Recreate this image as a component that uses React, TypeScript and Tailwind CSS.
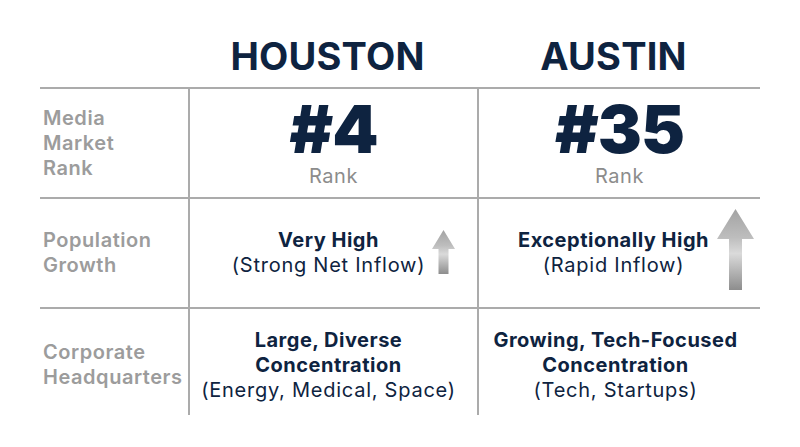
import React from "react";

function Arrow({ big }: { big?: boolean }) {
  const id = big ? "arrBig" : "arrSmall";
  const w = big ? 37 : 23;
  const h = big ? 81 : 44;
  const head = big ? 30 : 19;
  const s0 = big ? 12 : 6.5;
  const s1 = big ? 25 : 16.5;
  const pts = `${w / 2},0 ${w},${head} ${s1},${head} ${s1},${h} ${s0},${h} ${s0},${head} 0,${head}`;
  return (
    <svg width={w} height={h} viewBox={`0 0 ${w} ${h}`}>
      <defs>
        <linearGradient id={id} x1="0" y1="0" x2="0" y2="1">
          <stop offset="0" stopColor="#a3a3a3" />
          <stop offset="0.35" stopColor="#bdbdbd" />
          <stop offset="0.55" stopColor="#dadada" />
          <stop offset="1" stopColor="#8d8d8d" />
        </linearGradient>
      </defs>
      <polygon points={pts} fill={`url(#${id})`} />
    </svg>
  );
}

export default function App() {
  const label = "text-[20px] leading-[25px] font-semibold tracking-[0.55px] text-[#9c9c9c]";
  const bold = "text-[20px] leading-[25px] font-bold tracking-[0.5px]";
  const reg = "text-[20px] leading-[25px] tracking-[0.75px]";
  const cell = "relative flex flex-col items-center justify-center text-center border-t-2 border-l-2 border-[#ababab]";
  const labelCell = "flex flex-col justify-center pl-[3px] border-t-2 border-[#ababab]";

  return (
    <div className="w-[800px] h-[447px] bg-white px-[40px] font-['Inter','Liberation_Sans',sans-serif] text-[#0e2340]">
      <div className="grid grid-cols-[148px_289px_283px] grid-rows-[87px_110px_110px_108px]">
        {/* header */}
        <div />
        <div className="flex items-start justify-center pt-[34px] pr-[10px]">
          <div className="text-[38px] leading-[44px] font-bold tracking-[0.2px]">HOUSTON</div>
        </div>
        <div className="flex items-start justify-center pt-[34px] pr-[10px]">
          <div className="text-[38px] leading-[44px] font-bold tracking-[0.2px]">AUSTIN</div>
        </div>

        {/* media market rank */}
        <div className={labelCell}>
          <div className={label}>Media</div>
          <div className={label}>Market</div>
          <div className={label}>Rank</div>
        </div>
        <div className={cell + " pt-[2px]"}>
          <div className="text-[66px] leading-[60px] font-black tracking-[-1px]">#4</div>
          <div className="text-[20px] leading-[26px] tracking-[0.5px] text-[#8c8c8c] mt-[4px]">Rank</div>
        </div>
        <div className={cell + " pt-[2px]"}>
          <div className="text-[66px] leading-[60px] font-black tracking-[-1px]">#35</div>
          <div className="text-[20px] leading-[26px] tracking-[0.5px] text-[#8c8c8c] mt-[4px]">Rank</div>
        </div>

        {/* population growth */}
        <div className={labelCell}>
          <div className={label}>Population</div>
          <div className={label}>Growth</div>
        </div>
        <div className={cell + " pr-[10px]"}>
          <div className={bold}>Very High</div>
          <div className={reg}>(Strong Net Inflow)</div>
          <div className="absolute left-[242px] top-[31px]">
            <Arrow />
          </div>
        </div>
        <div className={cell + " pr-[12px]"}>
          <div className={bold}>Exceptionally High</div>
          <div className={reg}>(Rapid Inflow)</div>
          <div className="absolute left-[238px] top-[10px]">
            <Arrow big />
          </div>
        </div>

        {/* corporate hq */}
        <div className={labelCell + " pt-[6px]"}>
          <div className={label}>Corporate</div>
          <div className={label}>Headquarters</div>
        </div>
        <div className={cell + " pt-[6px] pr-[10px]"}>
          <div className={bold}>Large, Diverse</div>
          <div className={bold}>Concentration</div>
          <div className={reg}>(Energy, Medical, Space)</div>
        </div>
        <div className={cell + " pt-[6px] pr-[8px]"}>
          <div className={bold}>Growing, Tech-Focused</div>
          <div className={bold}>Concentration</div>
          <div className={reg}>(Tech, Startups)</div>
        </div>
      </div>
    </div>
  );
}
